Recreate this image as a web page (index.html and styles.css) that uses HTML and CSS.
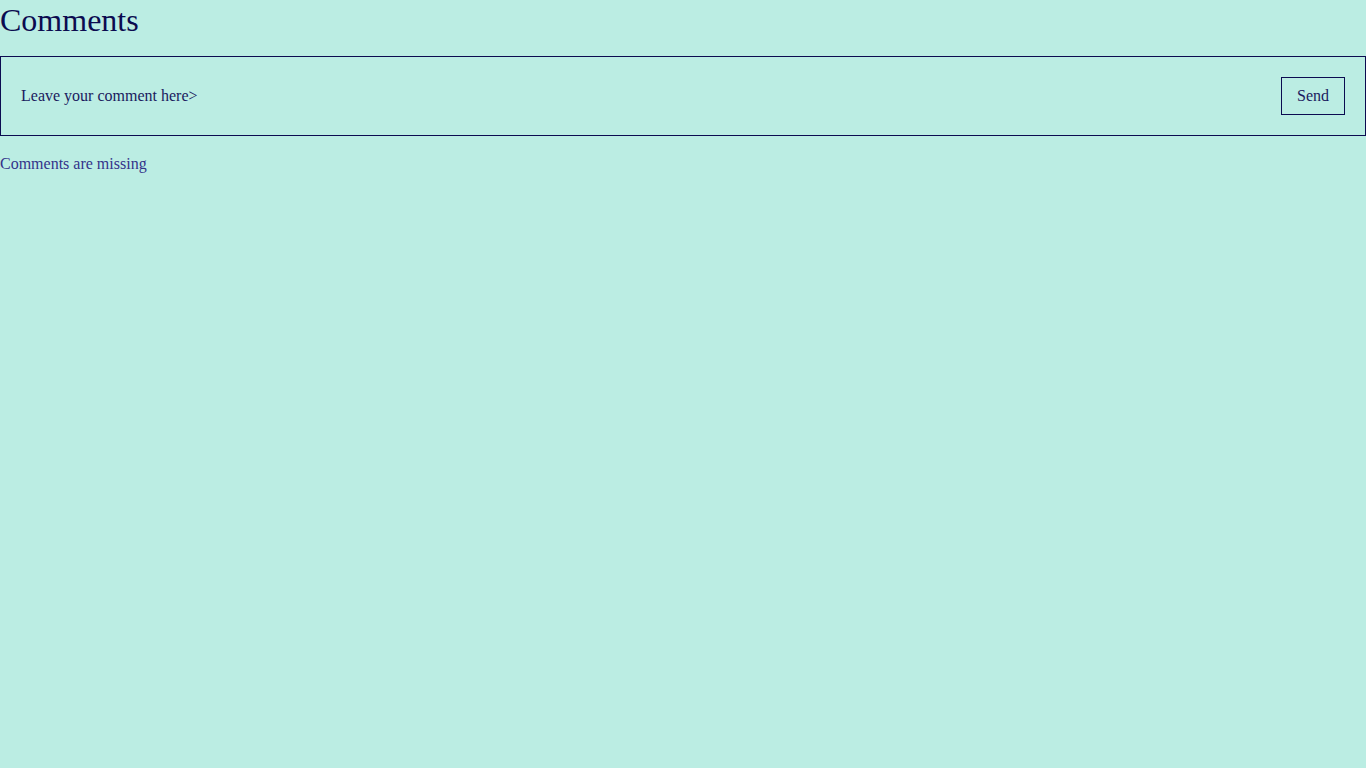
FILE: index.html
```html
<!DOCTYPE html>
<html lang="en">
<head>
<meta charset="utf-8">
<title>Comments</title>
<link rel="stylesheet" href="styles.css">
</head>
<body>
<main class="comments">
  <h1 class="comments__title">Comments</h1>
  <form class="comment-form">
    <input class="comment-form__input" type="text" placeholder="Leave your comment here>">
    <button class="comment-form__send" type="button">Send</button>
  </form>
  <p class="comments__empty">Comments are missing</p>
</main>
</body>
</html>
```
FILE: styles.css
```css
html, body {
  margin: 0;
  padding: 0;
  background: #bbede3;
}
body {
  font-family: "Liberation Serif", "Times New Roman", serif;
  color: #0b0b50;
}
.comments {
  display: flex;
  flex-direction: column;
}
.comments__title {
  margin: 0;
  padding-top: 2px;
  font-size: 32px;
  font-weight: normal;
  line-height: 37px;
  color: #0b0b50;
}
.comment-form {
  margin-top: 17px;
  display: flex;
  align-items: center;
  gap: 20px;
  padding: 20px;
  border: 1px solid #0b0b50;
}
.comment-form__input {
  flex: 1;
  border: none;
  background: transparent;
  font-family: inherit;
  font-size: 16px;
  padding: 0;
  outline: none;
  color: #1a1a5e;
}
.comment-form__input::placeholder {
  color: #1a1a5e;
  opacity: 1;
}
.comment-form__send {
  height: 38px;
  padding: 0 15px;
  border: 1px solid #0b0b50;
  background: transparent;
  font-family: inherit;
  font-size: 16px;
  color: #1a1a5e;
}
.comments__empty {
  margin: 19px 0 0;
  font-size: 16px;
  line-height: 18px;
  color: #33338a;
}
```
